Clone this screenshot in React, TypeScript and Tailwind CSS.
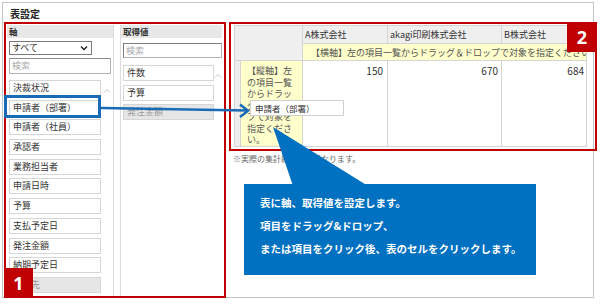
import React from 'react';

const axisItems = [
  '決裁状況',
  '申請者（部署）',
  '申請者（社員）',
  '承認者',
  '業務担当者',
  '申請日時',
  '予算',
  '支払予定日',
  '発注金額',
  '納期予定日',
];

const ScrollUp = () => (
  <svg width="8" height="5" viewBox="0 0 8 5">
    <path d="M1 4.5 L4 1.5 L7 4.5" fill="none" stroke="#c2c2c2" strokeWidth="1" />
  </svg>
);

const ListItem: React.FC<{ label: string; muted?: boolean }> = ({ label, muted }) => (
  <div
    className={
      muted
        ? 'h-[16px] border border-[#d6d6d6] bg-[#e6e6e6] pl-[3px] text-[9px] leading-[14px] text-[#9a9a9a]'
        : 'h-[16px] border border-[#d6d6d6] bg-white pl-[3px] text-[9px] leading-[14px] text-[#333]'
    }
  >
    {label}
  </div>
);

export default function App() {
  return (
    <div className="relative w-[600px] h-[304px] overflow-hidden bg-white font-['Noto_Sans_CJK_JP','Noto_Sans',sans-serif] text-[#333]">
      <div className="ml-[2px] mt-[2px] w-[592px] h-[296px] border border-[#c4c4c4] flex flex-col">
        <div className="h-[22px] pl-[7px] pt-[5px] text-[10px] font-bold leading-[12px] text-[#222]">表設定</div>

        <div className="flex">
          {/* Left panel: axis + values */}
          <div className="ml-[4px] flex h-[272px]">
            <div className="w-[107px] border-r border-[#dcdcdc] flex flex-col">
              <div className="h-[13px] bg-[#e8e8e8] pl-[2px] text-[8.5px] font-bold leading-[13px] text-[#333]">軸</div>
              <div className="mt-[3px] ml-[2px] w-[83px] h-[14px] border border-[#7a7a7a] flex items-center justify-between px-[2px] text-[9px] leading-[12px]">
                <span>すべて</span>
                <svg width="8" height="6" viewBox="0 0 8 6" className="mr-[1px]">
                  <path d="M1 1.5 L4 4.5 L7 1.5" fill="none" stroke="#222" strokeWidth="1.4" />
                </svg>
              </div>
              <div className="mt-[3px] ml-[2px] w-[102px] h-[16px] border border-[#b4b4b4] border-t-[#8c8c8c] pl-[2px] text-[9px] leading-[14px] text-[#aaa]">検索</div>
              <div className="mt-[6px] flex">
                <div className="ml-[2px] w-[92px] flex flex-col gap-[3.7px]">
                  {axisItems.map((s) => (
                    <ListItem key={s} label={s} />
                  ))}
                  <ListItem label="取引先" muted />
                </div>
                <div className="flex-1 flex justify-center pt-[8px]">
                  <ScrollUp />
                </div>
              </div>
            </div>

            <div className="ml-[6px] w-[102px] border-l border-[#dcdcdc] flex flex-col">
              <div className="h-[13px] bg-[#e8e8e8] pl-[2px] text-[8.5px] font-bold leading-[13px] text-[#333]">取得値</div>
              <div className="mt-[5px] ml-[2px] w-[99px] h-[15px] border border-[#b4b4b4] border-t-[#7c7c7c] border-l-[#7c7c7c] pl-[2px] text-[9px] leading-[13px] text-[#aaa]">検索</div>
              <div className="mt-[7px] flex">
                <div className="ml-[2px] w-[93px] flex flex-col gap-[3.5px]">
                  <ListItem label="件数" />
                  <ListItem label="予算" />
                  <ListItem label="発注金額" muted />
                </div>
                <div className="flex-1 flex justify-center pt-[8px]">
                  <ScrollUp />
                </div>
              </div>
            </div>
          </div>

          {/* Right: table */}
          <div className="ml-[12px] flex flex-col">
            <table className="table-fixed border-collapse w-[352px] text-[9px]">
              <colgroup>
                <col className="w-[6px]" />
                <col className="w-[62px]" />
                <col className="w-[85px]" />
                <col className="w-[114px]" />
                <col className="w-[85px]" />
              </colgroup>
              <tbody>
                <tr className="h-[18px]">
                  <td colSpan={2} rowSpan={2} className="border border-[#d4d4d4] bg-[#efefef]" />
                  <td className="border border-[#d4d4d4] bg-[#efefef] pl-[2px] text-left font-normal leading-[16px]">A株式会社</td>
                  <td className="border border-[#d4d4d4] bg-[#efefef] pl-[2px] text-left font-normal leading-[16px]">akagi印刷株式会社</td>
                  <td className="border border-[#d4d4d4] bg-[#efefef] pl-[2px] text-left font-normal leading-[16px]">B株式会社</td>
                </tr>
                <tr className="h-[17px]">
                  <td colSpan={3} className="border border-[#d4d4d4] bg-[#ffffcc] pl-[8px] whitespace-nowrap overflow-hidden leading-[15px] text-[#555]">
                    【横軸】左の項目一覧からドラッグ＆ドロップで対象を指定ください
                  </td>
                </tr>
                <tr className="h-[86px]">
                  <td className="border border-[#d4d4d4] bg-[#eeeeee]" />
                  <td className="border border-[#d4d4d4] bg-[#ffffcc] align-top pt-[4px] pl-[6px] pr-[8px] text-[9px] leading-[11.5px] text-[#555] break-all">
                    【縦軸】左の項目一覧からドラッグ＆ドロップで対象を指定ください。
                  </td>
                  <td className="border border-[#d4d4d4] align-top pt-[3px] pr-[4px] text-right text-[10px] leading-[13px]">150</td>
                  <td className="border border-[#d4d4d4] align-top pt-[3px] pr-[3px] text-right text-[10px] leading-[13px]">670</td>
                  <td className="border border-[#d4d4d4] align-top pt-[3px] pr-[2px] text-right text-[10px] leading-[13px]">684</td>
                </tr>
              </tbody>
            </table>
            <div className="mt-[7px] -ml-[1px] text-[8px] leading-[10px] text-[#666]">※実際の集計結果とは異なります。</div>
          </div>
        </div>
      </div>

      {/* Annotation overlays */}
      <div className="absolute left-[4px] top-[22px] w-[222px] h-[276px] border-2 border-[#c00000]" />
      <div className="absolute left-[229px] top-[22px] w-[368px] h-[129px] border-2 border-[#c00000]" />

      <div className="absolute left-[250px] top-[100px] w-[94px] h-[16px] border border-[#cfcfcf] bg-white pl-[4px] text-[8.5px] leading-[14px] text-[#333]">申請者（部署）</div>

      <div className="absolute left-[4px] top-[95px] w-[97px] h-[23px] border-[3px] border-[#1a6bb5]" />

      <svg className="absolute left-0 top-0 pointer-events-none" width="600" height="304" viewBox="0 0 600 304">
        <line x1="101" y1="108" x2="247" y2="110.5" stroke="#1a6bb5" strokeWidth="2.5" />
        <polyline points="240,104.5 248,110.8 240,117" fill="none" stroke="#1a6bb5" strokeWidth="2.5" />
        <polygon points="273,127 293,186 368,186" fill="#0070c0" />
      </svg>

      <div className="absolute left-[244px] top-[184px] w-[292px] h-[91px] bg-[#0070c0] pl-[16px] pt-[7px] text-[10.5px] font-bold leading-[23px] text-white">
        <div>表に軸、取得値を設定します。</div>
        <div>項目をドラッグ&amp;ドロップ、</div>
        <div>または項目をクリック後、表のセルをクリックします。</div>
      </div>

      <div className="absolute left-[4px] top-[268px] w-[29px] h-[30px] bg-[#c00000] flex items-center justify-center text-[18px] font-bold text-white font-['Noto_Sans',sans-serif]">1</div>
      <div className="absolute left-[567px] top-[22px] w-[30px] h-[30px] bg-[#c00000] flex items-center justify-center text-[18px] font-bold text-white font-['Noto_Sans',sans-serif]">2</div>
    </div>
  );
}
